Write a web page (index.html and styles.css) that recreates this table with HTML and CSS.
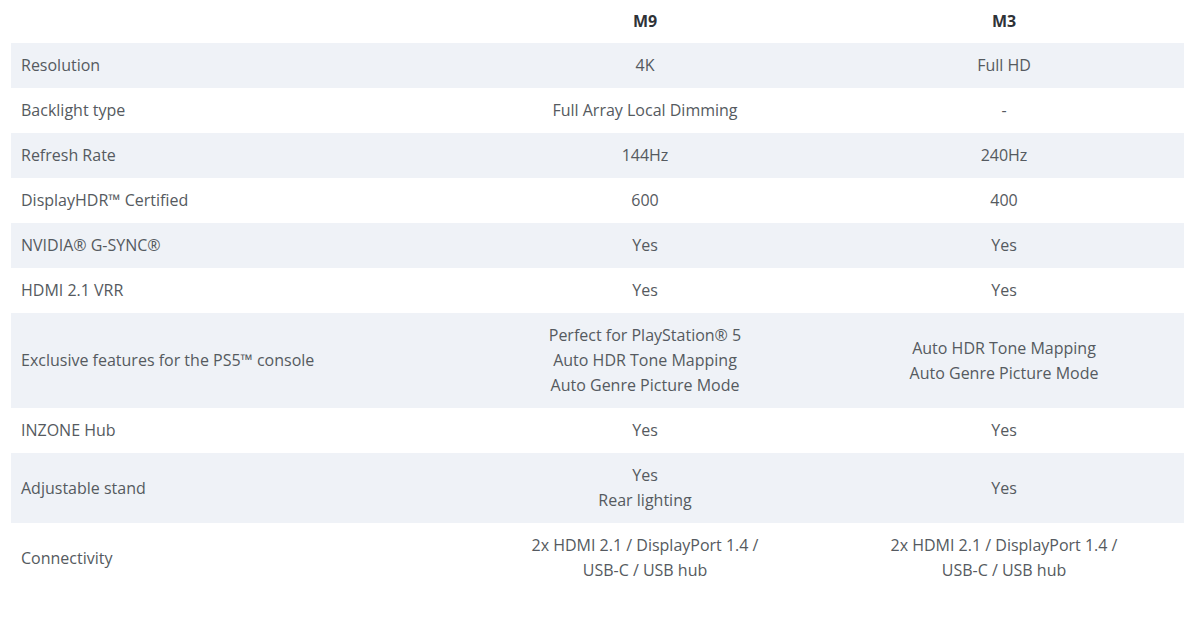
FILE: index.html
```html
<!DOCTYPE html>
<html lang="en">
<head>
<meta charset="utf-8">
<title>INZONE comparison</title>
<link rel="stylesheet" href="styles.css">
</head>
<body>
<table class="compare">
  <colgroup>
    <col class="c-label">
    <col class="c-model">
    <col class="c-model2">
  </colgroup>
  <thead>
    <tr><th></th><th>M9</th><th>M3</th></tr>
  </thead>
  <tbody>
    <tr><td>Resolution</td><td>4K</td><td>Full HD</td></tr>
    <tr><td>Backlight type</td><td>Full Array Local Dimming</td><td>-</td></tr>
    <tr><td>Refresh Rate</td><td>144Hz</td><td>240Hz</td></tr>
    <tr><td>DisplayHDR™ Certified</td><td>600</td><td>400</td></tr>
    <tr><td>NVIDIA® G-SYNC®</td><td>Yes</td><td>Yes</td></tr>
    <tr><td>HDMI 2.1 VRR</td><td>Yes</td><td>Yes</td></tr>
    <tr><td>Exclusive features for the PS5™ console</td><td>Perfect for PlayStation® 5<br>Auto HDR Tone Mapping<br>Auto Genre Picture Mode</td><td>Auto HDR Tone Mapping<br>Auto Genre Picture Mode</td></tr>
    <tr><td>INZONE Hub</td><td>Yes</td><td>Yes</td></tr>
    <tr><td>Adjustable stand</td><td>Yes<br>Rear lighting</td><td>Yes</td></tr>
    <tr><td>Connectivity</td><td>2x HDMI 2.1 / DisplayPort 1.4 /<br>USB-C / USB hub</td><td>2x HDMI 2.1 / DisplayPort 1.4 /<br>USB-C / USB hub</td></tr>
  </tbody>
</table>
</body>
</html>
```
FILE: styles.css
```css
html, body {
  margin: 0;
  padding: 0;
  background: #ffffff;
}
body {
  padding: 0 16px 0 11px;
  font-family: "Open Sans", "Noto Sans", "Liberation Sans", sans-serif;
  font-size: 16px;
  color: #555a60;
}
.compare {
  width: 1173px;
  border-collapse: collapse;
  table-layout: fixed;
}
.c-label { width: 455px; }
.c-model { width: 358px; }
.c-model2 { width: 360px; }
.compare th {
  height: 43px;
  padding: 0;
  font-weight: 700;
  color: #2f3237;
  text-align: center;
  vertical-align: middle;
  line-height: 25px;
}
.compare td {
  padding: 10px 10px;
  line-height: 25px;
  text-align: center;
  vertical-align: middle;
}
.compare td:first-child {
  text-align: left;
}
.compare tbody tr:nth-child(odd) {
  background: #eff2f7;
}
```
